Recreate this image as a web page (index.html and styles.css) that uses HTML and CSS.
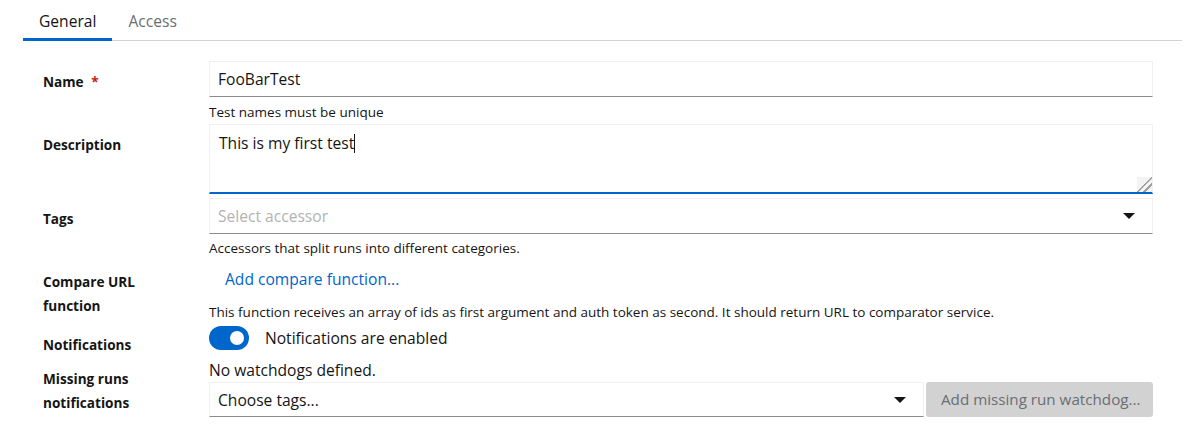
FILE: index.html
```html
<!DOCTYPE html>
<html lang="en">
<head>
<meta charset="utf-8">
<title>Test settings</title>
<link rel="stylesheet" href="styles.css">
</head>
<body>
<div class="page">
  <div class="tabs">
    <div class="tab active">General</div>
    <div class="tab">Access</div>
  </div>
  <form class="form">
    <div class="group">
      <div class="label">Name <span class="req">*</span></div>
      <div class="control">
        <div class="input">FooBarTest</div>
        <div class="helper">Test names must be unique</div>
      </div>
    </div>
    <div class="group g-desc">
      <div class="label">Description</div>
      <div class="control">
        <div class="textarea">This is my first test<span class="cursor"></span><span class="resize"></span></div>
      </div>
    </div>
    <div class="group g-tags">
      <div class="label">Tags</div>
      <div class="control">
        <div class="select"><span class="placeholder">Select accessor</span><span class="caret"></span></div>
        <div class="helper h-tags">Accessors that split runs into different categories.</div>
      </div>
    </div>
    <div class="group g-compare">
      <div class="label">Compare URL<br>function</div>
      <div class="control">
        <div class="link">Add compare function...</div>
        <div class="helper h-compare">This function receives an array of ids as first argument and auth token as second. It should return URL to comparator service.</div>
      </div>
    </div>
    <div class="group g-notif">
      <div class="label">Notifications</div>
      <div class="control">
        <div class="switch"><span class="toggle"><span class="knob"></span></span><span class="switch-text">Notifications are enabled</span></div>
      </div>
    </div>
    <div class="group g-missing">
      <div class="label">Missing runs<br>notifications</div>
      <div class="control">
        <div class="plain">No watchdogs defined.</div>
        <div class="row">
          <div class="select grow"><span>Choose tags...</span><span class="caret"></span></div>
          <div class="btn-disabled">Add missing run watchdog...</div>
        </div>
      </div>
    </div>
  </form>
</div>
</body>
</html>
```
FILE: styles.css
```css
* { box-sizing: border-box; }
html, body { margin: 0; background: #fff; }
body {
  font-family: "Open Sans", "Noto Sans", sans-serif;
  color: #151515;
  font-size: 14px;
}
.page { padding: 0 22px 0 23px; }
.tabs {
  display: flex;
  border-bottom: 1px solid #d2d2d2;
}
.tab {
  position: relative;
  padding: 9px 16px 7px;
  font-size: 15.6px;
  line-height: 24px;
  color: #6a6e73;
}
.tab.active { color: #151515; }
.tab.active::after {
  content: "";
  position: absolute;
  left: 0; right: 0; bottom: -1px;
  height: 3px;
  background: #06c;
}
.form {
  padding: 20px 29px 0 20px;
  display: flex;
  flex-direction: column;
}
.group {
  display: grid;
  grid-template-columns: 166px 1fr;
  align-items: start;
}
.label {
  font-weight: 700;
  font-size: 13.6px;
  line-height: 24px;
  padding-top: 9px;
}
.req { color: #c9190b; margin-left: 4px; }
.control { display: flex; flex-direction: column; }
.input, .select, .textarea {
  border: 1px solid #f0f0f0;
  border-bottom-color: #8a8d90;
  font-size: 15.6px;
  line-height: 24px;
  padding: 5px 8px;
  height: 36px;
  background: #fff;
}
.helper {
  font-size: 13.5px;
  line-height: 20px;
  margin-top: 5px;
}
.g-desc { margin-top: 2px; }
.textarea {
  position: relative;
  height: 70px;
  padding: 6px 9px;
  border-bottom: 2px solid #06c;
}
.cursor {
  display: inline-block;
  width: 1px;
  height: 19px;
  background: #151515;
  vertical-align: -4px;
}
.resize {
  position: absolute;
  right: 0; bottom: 0;
  width: 15px; height: 15px;
  background:
    linear-gradient(135deg, transparent 48%, #a0a0a0 48%, #a0a0a0 56%, transparent 56%, transparent 70%, #a0a0a0 70%, #a0a0a0 78%, transparent 78%),
    #f3f3f3;
}
.g-tags { margin-top: 4px; }
.select {
  display: flex;
  align-items: center;
  justify-content: space-between;
  padding: 5px 17px 5px 8px;
}
.placeholder { color: #b3b3b3; }
.caret {
  width: 0; height: 0;
  border-left: 6px solid transparent;
  border-right: 6px solid transparent;
  border-top: 6px solid #151515;
}
.h-tags { margin-top: 4px; }
.g-compare { margin-top: 3px; }
.link {
  color: #06c;
  font-size: 15.6px;
  line-height: 24px;
  padding: 6px 16px;
}
.h-compare { margin-top: 5px; }
.g-notif { margin-top: 2px; }
.switch {
  display: flex;
  align-items: center;
  gap: 16px;
  padding-top: 2px;
  font-size: 15.6px;
  line-height: 24px;
}
.toggle {
  width: 40px; height: 24px;
  border-radius: 12px;
  background: #06c;
  display: flex;
  align-items: center;
  justify-content: flex-end;
  padding-right: 5px;
}
.knob {
  width: 14px; height: 14px;
  border-radius: 50%;
  background: #fff;
}
.g-missing { margin-top: 1px; }
.plain {
  font-size: 15.6px;
  line-height: 23px;
  padding-top: 1px;
}
.row {
  display: flex;
  gap: 2px;
}
.select.grow { flex: 1; height: 35px; }
.btn-disabled {
  width: 227px;
  height: 35px;
  background: #d2d2d2;
  color: #6a6e73;
  border-radius: 3px;
  font-size: 15.2px;
  line-height: 24px;
  padding: 5px 15px;
  white-space: nowrap;
}
```
